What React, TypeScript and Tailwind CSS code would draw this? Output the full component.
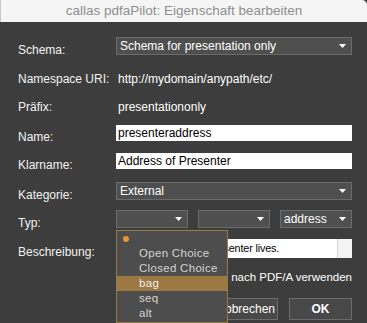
import React from "react";

function Arrow() {
  return (
    <svg width="7" height="4" viewBox="0 0 7 4" className="shrink-0">
      <polygon points="0,0 7,0 3.5,4" fill="#ffffff" />
    </svg>
  );
}

function Select({ value, className = "" }: { value?: string; className?: string }) {
  return (
    <div
      className={`flex items-center h-full border border-[#6b6b6b] bg-[#4f4f4f] pl-[3px] pr-[5px] text-white ${className}`}
    >
      <span className="flex-1 truncate">{value}</span>
      <Arrow />
    </div>
  );
}

function Row({
  label,
  className,
  children,
  offset = true,
}: {
  label: string;
  className: string;
  children: React.ReactNode;
  offset?: boolean;
}) {
  return (
    <div className={`flex items-center ${className}`}>
      <div className={`w-[98px] shrink-0 text-[#f2f2f2] ${offset ? "pt-[7px]" : ""}`}>{label}</div>
      <div className="flex-1 h-full flex items-center">{children}</div>
    </div>
  );
}

const menuItems = ["Open Choice", "Closed Choice", "bag", "seq", "alt"];

export default function App() {
  return (
    <div className="relative w-[367px] h-[323px] overflow-hidden bg-[#3d3d3d] text-[12px] font-['Liberation_Sans',Arial,sans-serif]">
      {/* title bar */}
      <div className="h-[22px] flex items-center justify-center bg-[#f5f5f5] border-l border-[#c8c8c8] rounded-tr-[5px] text-[13.5px] text-[#8e8e8e]">
        callas pdfaPilot: Eigenschaft bearbeiten
      </div>

      <div className="flex flex-col pl-[18px] pr-[15px]">
        <Row label="Schema:" className="h-[18px] mt-[15px]">
          <Select value="Schema for presentation only" className="w-full" />
        </Row>
        <Row label="Namespace URI:" className="h-[18px] mt-[15px]" offset={false}>
          <span className="pl-[2px] text-white">http://mydomain/anypath/etc/</span>
        </Row>
        <Row label="Präfix:" className="h-[18px] mt-[10px]" offset={false}>
          <span className="pl-[2px] text-white">presentationonly</span>
        </Row>
        <Row label="Name:" className="h-[16px] mt-[9px]">
          <div className="w-full h-full bg-white text-black pl-[2px] flex items-center">presenteraddress</div>
        </Row>
        <Row label="Klarname:" className="h-[16px] mt-[12px]">
          <div className="w-full h-full bg-white text-black pl-[2px] flex items-center">Address of Presenter</div>
        </Row>
        <Row label="Kategorie:" className="h-[18px] mt-[13px]">
          <Select value="External" className="w-full" />
        </Row>
        <Row label="Typ:" className="h-[18px] mt-[10px]">
          <div className="w-full h-full flex gap-[10px]">
            <Select className="w-[72px]" />
            <Select className="w-[72px]" />
            <Select value="address" className="w-[72px]" />
          </div>
        </Row>
        <Row label="Beschreibung:" className="h-[19px] mt-[11px]">
          <div className="w-full h-full bg-white flex">
            <div className="flex-1 flex items-center pl-[2px] text-black text-[10.8px] tracking-[-0.15px]">
              Address where the presenter lives.
            </div>
            <div className="w-[15px] border-l border-[#d6d6d6] bg-[#f3f3f3]" />
          </div>
        </Row>
        <div className="flex items-center justify-between h-[16px] mt-[12px] ml-[98px] text-[11.5px] text-white">
          <div className="w-[12px] h-[12px] border border-[#777] bg-[#4f4f4f] rounded-[2px]" />
          <span>Beim Konvertieren nach PDF/A verwenden</span>
        </div>
        <div className="flex justify-end gap-[11px] h-[22px] mt-[12px]">
          <button className="w-[68px] h-full flex items-center justify-end pr-[2px] border border-[#6b6b6b] bg-[#484848] text-white">
            Abbrechen
          </button>
          <button className="w-[63px] h-full flex items-center justify-center border border-[#6b6b6b] bg-[#484848] text-white font-bold">
            OK
          </button>
        </div>
      </div>

      {/* open dropdown menu */}
      <div className="absolute left-[116px] top-[230px] w-[112px] h-[93px] border border-[#9a7b47] bg-[#4d4d4d] text-[11.5px] tracking-[0.3px] text-[#d4d4d4]">
        <div className="h-[15px] flex items-center pl-[6px]">
          <div className="w-[6px] h-[6px] rounded-full bg-[#e8962e]" />
        </div>
        {menuItems.map((item) => (
          <div
            key={item}
            className={`h-[15px] flex items-center pl-[22px] ${item === "bag" ? "bg-[#9c7943] text-[#f0f0f0]" : ""}`}
          >
            {item}
          </div>
        ))}
      </div>
    </div>
  );
}
